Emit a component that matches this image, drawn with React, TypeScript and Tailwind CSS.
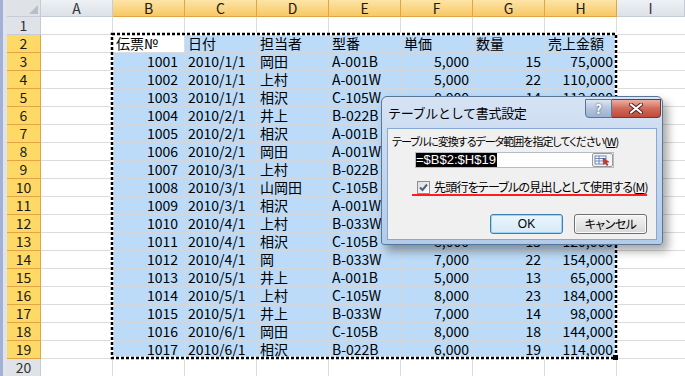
import React from "react";

type Row = [string, string, string, string, string, string, string];

const columns = ["A", "B", "C", "D", "E", "F", "G", "H", "I"];

const header: Row = ["伝票№", "日付", "担当者", "型番", "単価", "数量", "売上金額"];

const data: Row[] = [
  ["1001", "2010/1/1", "岡田", "A-001B", "5,000", "15", "75,000"],
  ["1002", "2010/1/1", "上村", "A-001W", "5,000", "22", "110,000"],
  ["1003", "2010/1/1", "相沢", "C-105W", "8,000", "14", "112,000"],
  ["1004", "2010/2/1", "井上", "B-022B", "6,000", "20", "120,000"],
  ["1005", "2010/2/1", "相沢", "A-001B", "5,000", "12", "60,000"],
  ["1006", "2010/2/1", "岡田", "A-001W", "5,000", "16", "80,000"],
  ["1007", "2010/3/1", "上村", "B-022B", "6,000", "17", "102,000"],
  ["1008", "2010/3/1", "山岡田", "C-105B", "8,000", "11", "88,000"],
  ["1009", "2010/3/1", "相沢", "A-001W", "5,000", "21", "105,000"],
  ["1010", "2010/4/1", "上村", "B-033W", "7,000", "18", "126,000"],
  ["1011", "2010/4/1", "相沢", "C-105B", "8,000", "15", "120,000"],
  ["1012", "2010/4/1", "岡", "B-033W", "7,000", "22", "154,000"],
  ["1013", "2010/5/1", "井上", "A-001B", "5,000", "13", "65,000"],
  ["1014", "2010/5/1", "上村", "C-105W", "8,000", "23", "184,000"],
  ["1015", "2010/5/1", "井上", "B-033W", "7,000", "14", "98,000"],
  ["1016", "2010/6/1", "岡田", "C-105B", "8,000", "18", "144,000"],
  ["1017", "2010/6/1", "相沢", "B-022B", "6,000", "19", "114,000"],
];

// 右寄せの列 (B, F, G, H)
const rightCols = [0, 4, 5, 6];

function ColHeader({ label, selected, last }: { label: string; selected: boolean; last?: boolean }) {
  return (
    <div
      className={`${last ? "flex-1" : "w-[72px]"} flex h-[17px] shrink-0 items-center justify-center border-b border-r text-[14px] leading-[16px] ${
        selected
          ? "border-[#e2a546] bg-gradient-to-b from-[#fde4a6] to-[#f7c962] text-[#1a1a1a]"
          : "border-[#c5ccd6] bg-gradient-to-b from-[#eef1f5] to-[#dde2e8] text-[#333]"
      }`}
    >
      {label}
    </div>
  );
}

function SheetRow({ n }: { n: number }) {
  const inSel = n >= 2 && n <= 19;
  const values: Row | null = n === 2 ? header : inSel ? data[n - 3] : null;

  return (
    <div className="flex h-[18px]">
      <div
        className={`flex w-[34px] shrink-0 items-center justify-center border-b border-r text-[14px] leading-[17px] ${
          inSel
            ? "border-[#e2a546] bg-[#ffd966] text-[#1a1a1a]"
            : "border-[#c5ccd6] bg-[#dfe3e8] text-[#333]"
        }`}
      >
        {n}
      </div>
      <div className="w-[72px] shrink-0 border-b border-r border-[#dadcdd]" />
      {[0, 1, 2, 3, 4, 5, 6].map((i) => {
        const active = n === 2 && i === 0;
        const blue = inSel && !active;
        const right = n !== 2 && rightCols.includes(i);
        return (
          <div
            key={i}
            className={`w-[72px] shrink-0 overflow-hidden whitespace-nowrap border-b border-r text-[14px] leading-[17px] ${
              blue ? "border-[#d3d7db] bg-[#bbdbf8]" : "border-[#dadcdd] bg-white"
            } ${right ? (i === 0 ? "pr-[6px] text-right" : "pr-[3px] text-right") : "pl-[3px] text-left"}`}
          >
            {values ? values[i] : ""}
          </div>
        );
      })}
      <div className="flex-1 border-b border-[#dadcdd]" />
    </div>
  );
}

function RefIcon() {
  return (
    <svg width="21" height="14" viewBox="0 0 21 14">
      <rect x="0.5" y="0.5" width="20" height="13" rx="1.5" fill="#f4f4f4" stroke="#9a9a9a" />
      <rect x="3" y="3" width="11" height="8" fill="#ffffff" stroke="#6a86b8" strokeWidth="1" />
      <line x1="3" y1="5.5" x2="14" y2="5.5" stroke="#6a86b8" />
      <line x1="3" y1="8" x2="14" y2="8" stroke="#6a86b8" />
      <line x1="7" y1="3" x2="7" y2="11" stroke="#6a86b8" />
      <path d="M11 5 L17 9 L14.5 9.3 L16 12 L14.8 12.5 L13.4 9.8 L11.5 11.3 Z" fill="#d23a2a" stroke="#8a1a10" strokeWidth="0.5" />
    </svg>
  );
}

function Dialog() {
  return (
    <div className="absolute left-[381px] top-[96px] flex h-[149px] w-[282px] flex-col rounded-b-[3px] rounded-t-[6px] border border-[#5c7796] bg-gradient-to-b from-[#d6e3f4] via-[#c3d6ee] to-[#b3cbea] px-[5px] pb-[4px] shadow-[5px_6px_10px_rgba(0,0,0,0.35)] font-['Noto_Sans_CJK_JP',sans-serif]">
      <div className="flex h-[31px] shrink-0 items-start">
        <div className="pl-[1px] pt-[8px] text-[13px] leading-[15px] tracking-[-0.3px] text-black">テーブルとして書式設定</div>
        <div className="-mr-[4px] ml-auto mt-[2px] flex h-[19px]">
          <div className="flex w-[27px] items-center justify-center rounded-bl-[4px] border border-[#5d7497] bg-gradient-to-b from-[#dce6f3] via-[#b4c5dd] to-[#9cb1cf] text-[13px] font-bold leading-none text-white [text-shadow:0_0_2px_#2c3e5c]">
            ?
          </div>
          <div className="flex w-[49px] items-center justify-center rounded-br-[4px] border border-l-0 border-[#6e3a35] bg-gradient-to-b from-[#eab0a4] via-[#d06a5a] to-[#c04a38]">
            <svg width="14" height="11" viewBox="0 0 14 11">
              <path d="M2 1.5 L12 9.5 M12 1.5 L2 9.5" stroke="#4a2420" strokeWidth="4" strokeLinecap="round" />
              <path d="M2 1.5 L12 9.5 M12 1.5 L2 9.5" stroke="#ffffff" strokeWidth="2.2" strokeLinecap="round" />
            </svg>
          </div>
        </div>
      </div>
      <div className="flex flex-1 flex-col border border-[#86a8d2] bg-[#f0f0f0] text-[12px] leading-[14px] text-black [font-feature-settings:'palt']">
        <div className="ml-[4px] mt-[5px] h-[14px] whitespace-nowrap text-[11px] tracking-[-1px]">
          テーブルに変換するデータ範囲を指定してください(<span className="underline">W</span>)
        </div>
        <div className="ml-[27px] mt-[4px] flex h-[16px] w-[199px] items-center border border-[#b5bcc6] bg-white">
          <span className="h-[14px] bg-black pr-[1px] text-[13px] leading-[14px] text-white [font-family:'Liberation_Sans',sans-serif]">=$B$2:$H$19</span>
          <div className="ml-auto">
            <RefIcon />
          </div>
        </div>
        <div className="ml-[29px] mt-[12px] flex h-[14px] items-center gap-[4px] whitespace-nowrap">
          <div className="flex h-[13px] w-[13px] items-center justify-center border border-[#8e8f8f] bg-gradient-to-br from-[#dcdcdc] to-[#ffffff]">
            <svg width="11" height="11" viewBox="0 0 11 11">
              <path d="M2 5.5 L4.5 8 L9 2.5" fill="none" stroke="#4d6185" strokeWidth="2" />
            </svg>
          </div>
          <span className="tracking-[-0.8px]">
            先頭行をテーブルの見出しとして使用する(<span className="underline">M</span>)
          </span>
        </div>
        <div className="ml-[24px] h-[2px] w-[235px] bg-[#ff1e1e]" />
        <div className="ml-[102px] mt-[18px] flex gap-[11px]">
          <div className="flex h-[20px] w-[73px] items-center justify-center rounded-[3px] border border-[#3c7fb1] bg-gradient-to-b from-[#eaf6fd] to-[#d7e9f6] shadow-[inset_0_0_0_1px_#9fd4f4] [font-family:'Liberation_Sans',sans-serif]">
            OK
          </div>
          <div className="flex h-[20px] w-[73px] items-center justify-center rounded-[3px] border border-[#707070] bg-gradient-to-b from-[#f4f4f4] to-[#d8d8d8] tracking-[-0.5px] shadow-[inset_0_0_0_1px_#fbfbfb]">
            キャンセル
          </div>
        </div>
      </div>
    </div>
  );
}

export default function App() {
  const rows = Array.from({ length: 20 }, (_, i) => i + 1);
  return (
    <div className="relative flex h-[376px] w-[685px] overflow-hidden bg-white text-black font-['Noto_Sans_CJK_JP',sans-serif]">
      <div className="flex h-full shrink-0">
        <div className="w-[3px] bg-[#a3b1d5]" />
        <div className="w-[4px] bg-[#dfe4ec]" />
      </div>
      <div className="flex flex-1 flex-col">
        <div className="flex h-[17px]">
          <div className="flex h-[17px] w-[34px] shrink-0 items-end justify-end border-b border-r border-[#c5ccd6] bg-[#dfe3e8] p-[2px]">
            <svg width="9" height="9" viewBox="0 0 9 9">
              <path d="M9 0 L9 9 L0 9 Z" fill="#b8bec6" />
            </svg>
          </div>
          {columns.map((c, i) => (
            <ColHeader key={c} label={c} selected={i >= 1 && i <= 7} last={i === 8} />
          ))}
        </div>
        {rows.map((n) => (
          <SheetRow key={n} n={n} />
        ))}
      </div>

      {/* コピー範囲の点線枠 */}
      <svg className="pointer-events-none absolute left-[110px] top-[32px]" width="508" height="330" viewBox="0 0 508 330">
        <rect x="2" y="2" width="504" height="324" fill="none" stroke="#ffffff" strokeWidth="3" />
        <rect x="2" y="2" width="504" height="324" fill="none" stroke="#000000" strokeWidth="2.5" strokeDasharray="3 2" />
        <rect x="503" y="323" width="5" height="5" fill="#000000" />
      </svg>

      <Dialog />
    </div>
  );
}
